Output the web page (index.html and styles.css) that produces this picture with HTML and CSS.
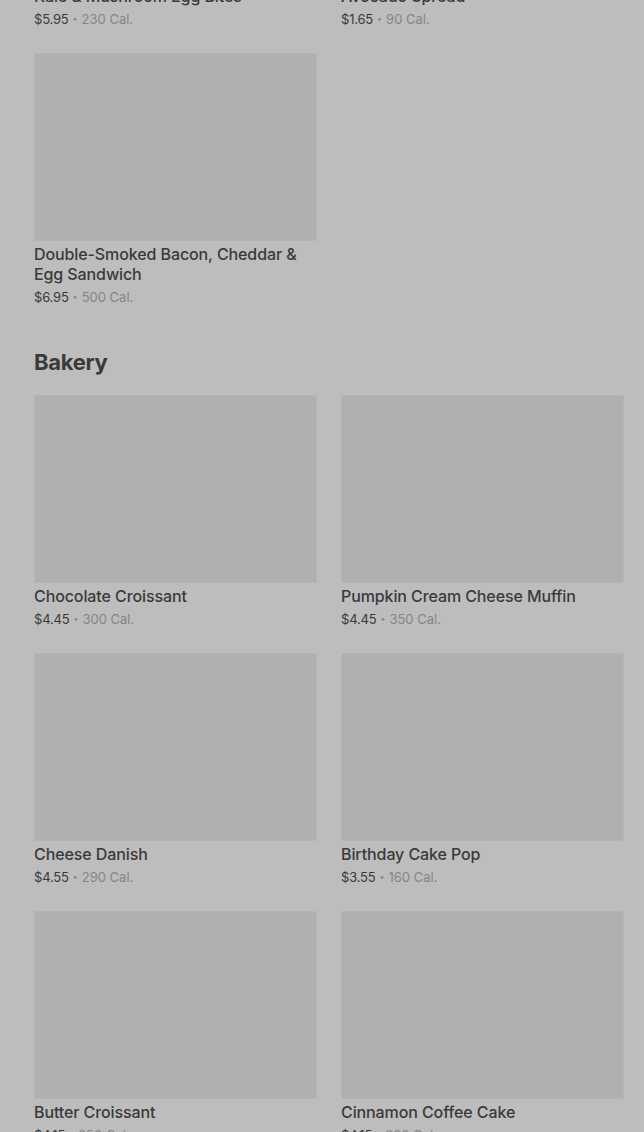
FILE: index.html
```html
<!DOCTYPE html>
<html lang="en">
<head>
<meta charset="utf-8">
<title>Menu</title>
<link rel="stylesheet" href="styles.css">
</head>
<body>
<main class="page">
  <section class="section">
    <div class="grid">
      <article class="card">
        <div class="thumb"></div>
        <h3 class="name">Kale &amp; Mushroom Egg Bites</h3>
        <p class="meta"><span class="price">$5.95</span><span class="dot">•</span><span class="cal">230 Cal.</span></p>
      </article>
      <article class="card">
        <div class="thumb"></div>
        <h3 class="name">Avocado Spread</h3>
        <p class="meta"><span class="price">$1.65</span><span class="dot">•</span><span class="cal">90 Cal.</span></p>
      </article>
      <article class="card">
        <div class="thumb"></div>
        <h3 class="name">Double-Smoked Bacon, Cheddar &amp; Egg Sandwich</h3>
        <p class="meta"><span class="price">$6.95</span><span class="dot">•</span><span class="cal">500 Cal.</span></p>
      </article>
    </div>
  </section>
  <section class="section">
    <h2 class="section-title">Bakery</h2>
    <div class="grid">
      <article class="card">
        <div class="thumb"></div>
        <h3 class="name">Chocolate Croissant</h3>
        <p class="meta"><span class="price">$4.45</span><span class="dot">•</span><span class="cal">300 Cal.</span></p>
      </article>
      <article class="card">
        <div class="thumb"></div>
        <h3 class="name">Pumpkin Cream Cheese Muffin</h3>
        <p class="meta"><span class="price">$4.45</span><span class="dot">•</span><span class="cal">350 Cal.</span></p>
      </article>
      <article class="card">
        <div class="thumb"></div>
        <h3 class="name">Cheese Danish</h3>
        <p class="meta"><span class="price">$4.55</span><span class="dot">•</span><span class="cal">290 Cal.</span></p>
      </article>
      <article class="card">
        <div class="thumb"></div>
        <h3 class="name">Birthday Cake Pop</h3>
        <p class="meta"><span class="price">$3.55</span><span class="dot">•</span><span class="cal">160 Cal.</span></p>
      </article>
      <article class="card">
        <div class="thumb"></div>
        <h3 class="name">Butter Croissant</h3>
        <p class="meta"><span class="price">$4.15</span><span class="dot">•</span><span class="cal">250 Cal.</span></p>
      </article>
      <article class="card">
        <div class="thumb"></div>
        <h3 class="name">Cinnamon Coffee Cake</h3>
        <p class="meta"><span class="price">$4.15</span><span class="dot">•</span><span class="cal">380 Cal.</span></p>
      </article>
    </div>
  </section>
</main>
</body>
</html>
```
FILE: styles.css
```css
html, body {
  margin: 0;
  padding: 0;
  background: #bdbdbd;
}
body {
  font-family: Inter, "Liberation Sans", sans-serif;
  color: #363636;
  overflow: hidden;
}
.page {
  margin-top: -205px;
  padding: 0 20px 0 34px;
}
.section-title {
  margin: 42px 0 19px;
  font-size: 22px;
  line-height: 28px;
  font-weight: 700;
  color: #3a3a3a;
  letter-spacing: -0.3px;
}
.grid {
  display: grid;
  grid-template-columns: 1fr 1fr;
  column-gap: 24px;
  row-gap: 25px;
}
.card {
  display: flex;
  flex-direction: column;
}
.thumb {
  height: 188px;
  background: #b0b0b0;
  border-radius: 3px;
  box-shadow: inset 0 0 0 1px #b4b4b4;
}
.name {
  margin: 3px 0 0;
  font-size: 16px;
  line-height: 20px;
  font-weight: 500;
  color: #3a3a3a;
  letter-spacing: -0.1px;
}
.meta {
  display: flex;
  align-items: center;
  height: 18px;
  margin: 4px 0 0;
  font-size: 13px;
  line-height: 18px;
}
.price {
  color: #3a3a3a;
  letter-spacing: -0.2px;
}
.dot {
  color: #8a8a8a;
  margin: 0 4px;
  font-size: 9px;
}
.cal {
  color: #858585;
}
```
